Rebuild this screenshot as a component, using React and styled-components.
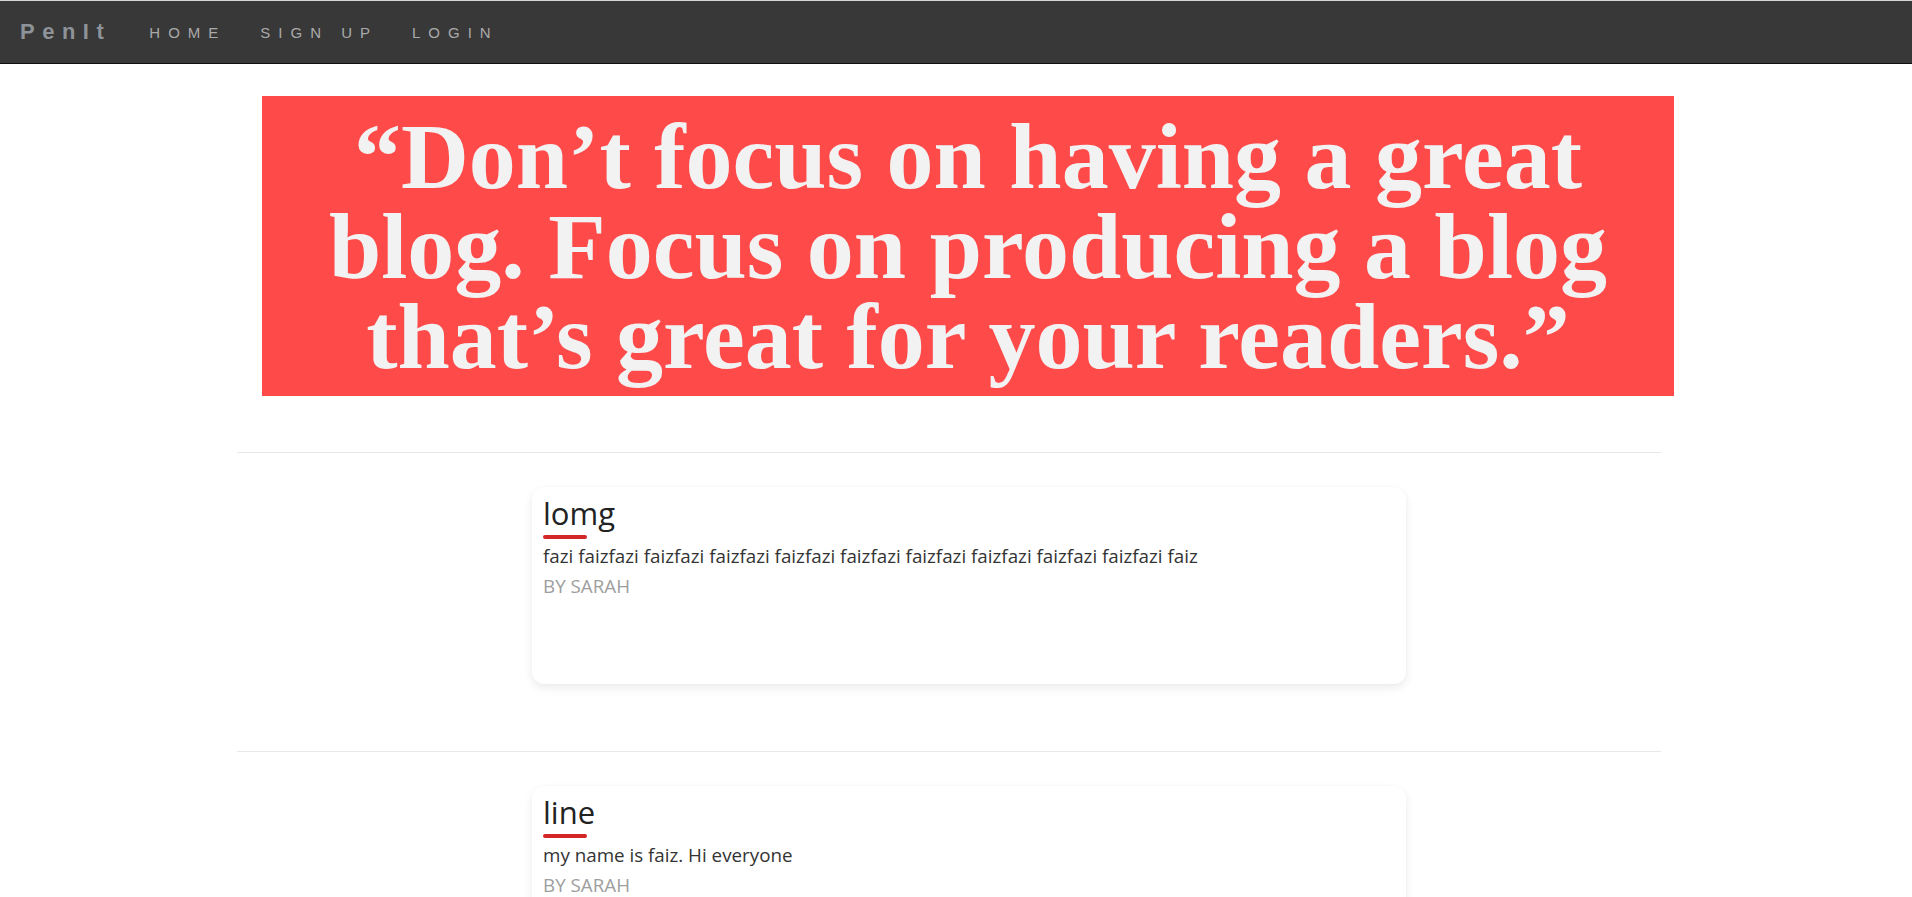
import React from 'react';
import styled, {createGlobalStyle} from 'styled-components';

const GlobalStyle = createGlobalStyle`
    html {
        overflow-y: scroll;
    }
    html, body {
        margin: 0;
        padding: 0;
        background: #ffffff;
    }
    body {
        font-family: "Open Sans", "Noto Sans", Arial, sans-serif;
    }
    ::-webkit-scrollbar {
        width: 17px;
        background: #f1f1f1;
    }
    ::-webkit-scrollbar-thumb {
        background: #c1c1c1;
        border-left: 2px solid #f1f1f1;
        border-right: 2px solid #f1f1f1;
    }
`;

const posts = [
    {title: 'lomg', body: 'fazi faizfazi faizfazi faizfazi faizfazi faizfazi faizfazi faizfazi faizfazi faizfazi faiz', author: 'BY SARAH'},
    {title: 'line', body: 'my name is faiz. Hi everyone', author: 'BY SARAH'},
    {title: 'hello', body: 'first post on penit', author: 'BY SARAH'},
    {title: 'blog', body: 'writing something for the readers', author: 'BY SARAH'},
];

export default function App() {
    return <Page>
        <GlobalStyle />
        <Navbar>
            <Brand>PenIt</Brand>
            <NavLinks>
                <NavLink>HOME</NavLink>
                <NavLink>SIGN UP</NavLink>
                <NavLink>LOGIN</NavLink>
            </NavLinks>
        </Navbar>
        <Hero>
            “Don’t focus on having a great blog. Focus on producing a blog that’s great for your readers.”
        </Hero>
        <PostList>
            {
                posts.map((post, i) => <Post key={i}>
                    <Divider />
                    <Card>
                        <Title>{post.title}</Title>
                        <Underline />
                        <Body>{post.body}</Body>
                        <Author>{post.author}</Author>
                    </Card>
                </Post>)
            }
        </PostList>
    </Page>
}

const Page = styled.div`
    min-height: 100vh;
    padding-bottom: 40px;
`;

const Navbar = styled.nav`
    display: flex;
    align-items: center;
    height: 62px;
    background-color: #383838;
    border-top: 1px solid #d6d6d6;
    border-bottom: 1px solid #111;
    padding-left: 20px;
    font-family: "Liberation Sans", Arial, sans-serif;
`;

const Brand = styled.div`
    font-size: 22px;
    font-weight: bold;
    letter-spacing: 7.5px;
    color: #8d9398;
    margin-right: 38px;
`;

const NavLinks = styled.div`
    display: flex;
    align-items: center;
    gap: 34px;
`;

const NavLink = styled.a`
    font-size: 15px;
    letter-spacing: 8px;
    color: #aaaaaa;
    cursor: pointer;
`;

const Hero = styled.h1`
    box-sizing: border-box;
    width: 1412px;
    margin: 32px 0 0 262px;
    padding: 15px 0;
    background-color: #ff4a4a;
    color: #f2f2f2;
    font-family: "Liberation Serif", "Times New Roman", serif;
    font-size: 94px;
    font-weight: bold;
    line-height: 90px;
    text-align: center;
`;

const PostList = styled.div`
    margin-top: 56px;
    display: flex;
    flex-direction: column;
`;

const Post = styled.div`
    display: flex;
    flex-direction: column;
`;

const Divider = styled.hr`
    width: 1424px;
    margin: 0 0 0 237px;
    border: none;
    border-top: 1px solid #e9e9e9;
`;

const Card = styled.div`
    box-sizing: border-box;
    width: 874px;
    height: 197px;
    margin: 34px 0 67px 532px;
    padding: 8px 11px 0;
    background: #fff;
    border-radius: 12px;
    box-shadow: 0 4px 10px rgba(0, 0, 0, 0.08), 0 0 2px rgba(0, 0, 0, 0.03);
`;

const Title = styled.h3`
    margin: 0;
    font-size: 31px;
    font-weight: normal;
    line-height: 1.2;
    color: #222;
`;

const Underline = styled.div`
    width: 44px;
    height: 4px;
    margin-top: 3px;
    border-radius: 2px;
    background-color: #d42626;
`;

const Body = styled.p`
    margin: 3px 0 0;
    font-size: 18.8px;
    line-height: 1.5;
    color: #333;
`;

const Author = styled.div`
    margin-top: 2px;
    font-size: 18.8px;
    line-height: 1.5;
    color: #9e9e9e;
`;
